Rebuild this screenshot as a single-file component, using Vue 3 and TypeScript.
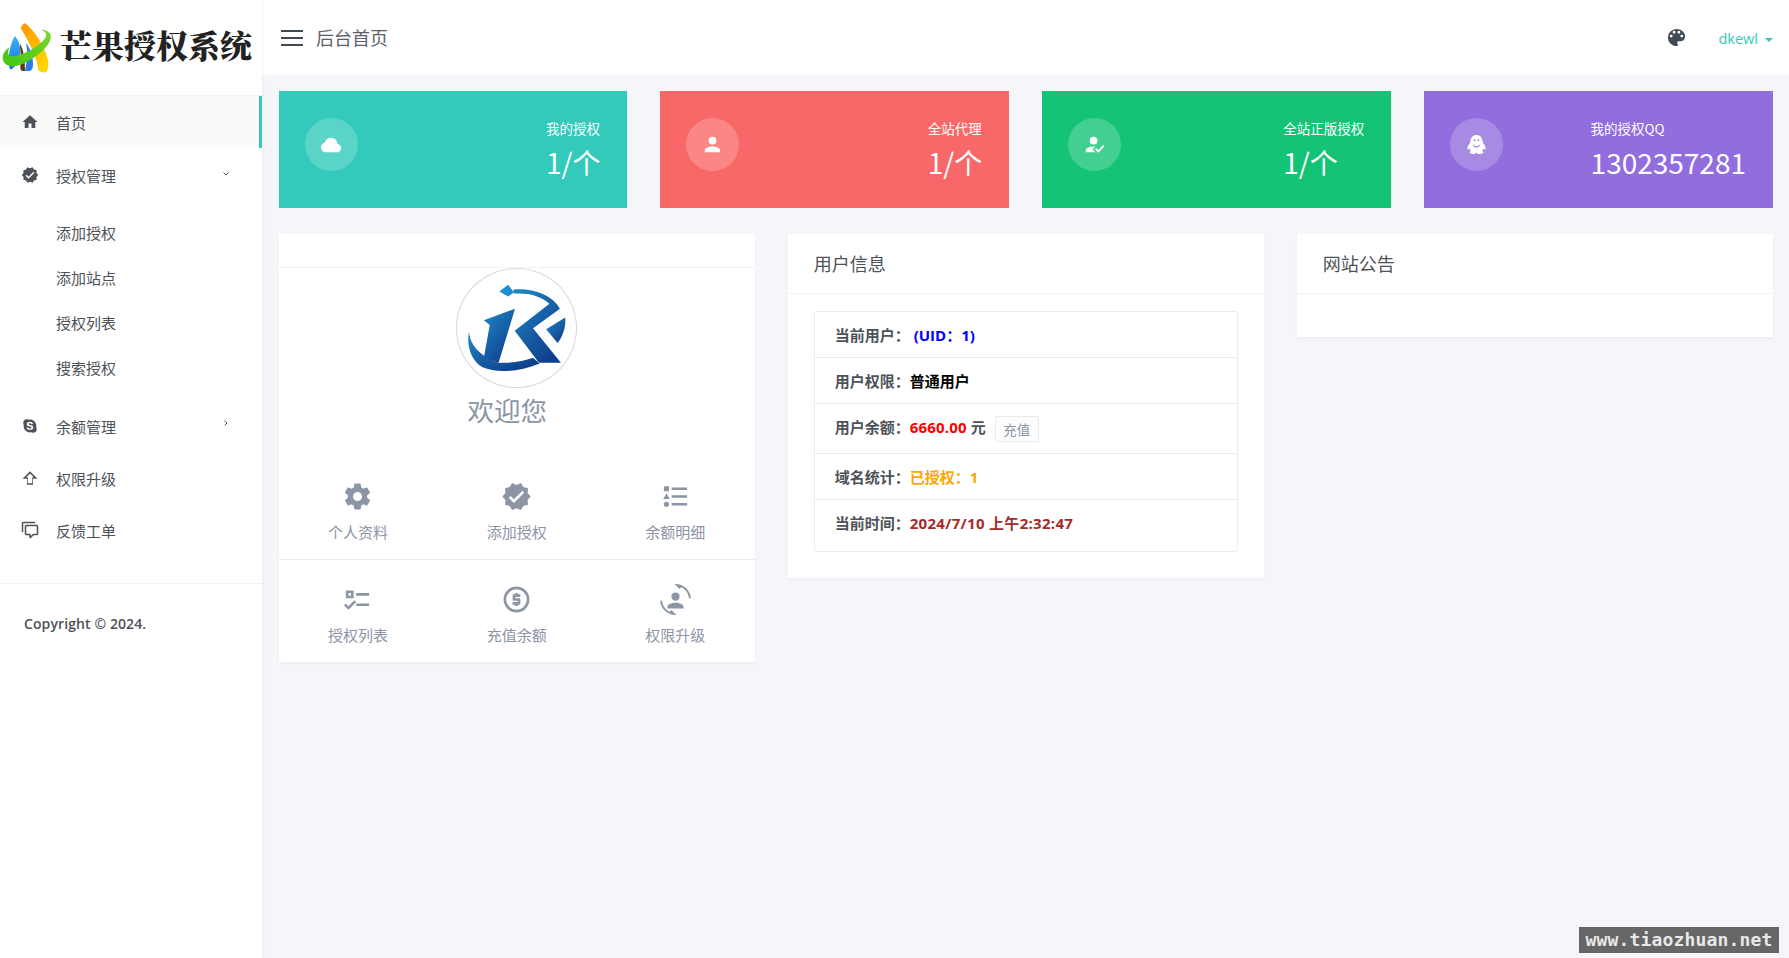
<script setup lang="ts">
const icons: Record<string, string> = {
  home: 'M10 20v-6h4v6h5v-8h3L12 3 2 12h3v8z',
  decagram: 'M23,12L20.56,9.22L20.9,5.54L17.29,4.72L15.4,1.54L12,3L8.6,1.54L6.71,4.72L3.1,5.53L3.44,9.21L1,12L3.44,14.78L3.1,18.47L6.71,19.29L8.6,22.47L12,21L15.4,22.46L17.29,19.28L20.9,18.46L20.56,14.78L23,12M10,17L6,13L7.41,11.59L10,14.17L16.59,7.58L18,9L10,17Z',
  skype: 'M18,6C20.07,8.04 20.85,10.89 20.36,13.55C20.77,14.27 21,15.11 21,16A5,5 0 0,1 16,21C15.11,21 14.27,20.77 13.55,20.36C10.89,20.85 8.04,20.07 6,18C3.93,15.96 3.15,13.11 3.64,10.45C3.23,9.73 3,8.89 3,8A5,5 0 0,1 8,3C8.89,3 9.73,3.23 10.45,3.64C13.11,3.15 15.96,3.93 18,6M12.04,17.16C14.91,17.16 16.34,15.78 16.34,13.92C16.34,12.73 15.78,11.46 13.61,10.97L11.62,10.53C10.86,10.36 10,10.13 10,9.42C10,8.7 10.6,8.2 11.7,8.2C13.93,8.2 13.72,9.73 14.83,9.73C15.41,9.73 15.91,9.39 15.91,8.8C15.91,7.43 13.72,6.4 11.86,6.4C9.85,6.4 7.7,7.26 7.7,9.54C7.7,10.64 8.09,11.81 10.25,12.35L12.94,13.03C13.75,13.23 13.95,13.68 13.95,14.1C13.95,14.78 13.27,15.45 12.04,15.45C9.63,15.45 9.96,13.6 8.67,13.6C8.09,13.6 7.67,14 7.67,14.57C7.67,15.68 9,17.16 12.04,17.16Z',
  upgrade: 'M16,13V21H8V13H2L12,3L22,13H16M7,11H9V19H15V11H17L12,6L7,11Z',
  comments: 'M12,23A1,1 0 0,1 11,22V19H7A2,2 0 0,1 5,17V7A2,2 0 0,1 7,5H21A2,2 0 0,1 23,7V17A2,2 0 0,1 21,19H16.9L13.2,22.71C13,22.89 12.76,23 12.5,23H12M13,17V20.08L16.08,17H21V7H7V17H13M3,15H1V3A2,2 0 0,1 3,1H19V3H3V15Z',
  cog: 'M12,15.5A3.5,3.5 0 0,1 8.5,12A3.5,3.5 0 0,1 12,8.5A3.5,3.5 0 0,1 15.5,12A3.5,3.5 0 0,1 12,15.5M19.43,12.97C19.47,12.65 19.5,12.33 19.5,12C19.5,11.67 19.47,11.34 19.43,11L21.54,9.37C21.73,9.22 21.78,8.95 21.66,8.73L19.66,5.27C19.54,5.05 19.27,4.96 19.05,5.05L16.56,6.05C16.04,5.66 15.5,5.32 14.87,5.07L14.5,2.42C14.46,2.18 14.25,2 14,2H10C9.75,2 9.54,2.18 9.5,2.42L9.13,5.07C8.5,5.32 7.96,5.66 7.44,6.05L4.95,5.05C4.73,4.96 4.46,5.05 4.34,5.27L2.34,8.73C2.21,8.95 2.27,9.22 2.46,9.37L4.57,11C4.53,11.34 4.5,11.67 4.5,12C4.5,12.33 4.53,12.65 4.57,12.97L2.46,14.63C2.27,14.78 2.21,15.05 2.34,15.27L4.34,18.73C4.46,18.95 4.73,19.03 4.95,18.95L7.44,17.94C7.96,18.34 8.5,18.68 9.13,18.93L9.5,21.58C9.54,21.82 9.75,22 10,22H14C14.25,22 14.46,21.82 14.5,21.58L14.87,18.93C15.5,18.67 16.04,18.34 16.56,17.94L19.05,18.95C19.27,19.03 19.54,18.95 19.66,18.73L21.66,15.27C21.78,15.05 21.73,14.78 21.54,14.63L19.43,12.97Z',
  listType: 'M5,9.5L7.5,14H2.5L5,9.5M3,4H7V8H3V4M5,20A2,2 0 0,0 7,18A2,2 0 0,0 5,16A2,2 0 0,0 3,18A2,2 0 0,0 5,20M9,5V7H21V5H9M9,19H21V17H9V19M9,13H21V11H9V13Z',
  listChecks: 'M3,5H9V11H3V5M5,7V9H7V7H5M11,7H21V9H11V7M11,15H21V17H11V15M5,20L1.5,16.5L2.91,15.09L5,17.17L9.59,12.59L11,14L5,20Z',
  usd: 'M11 17V16H9V14H13V13H10A1 1 0 0 1 9 12V9A1 1 0 0 1 10 8H11V7H13V8H15V10H11V11H14A1 1 0 0 1 15 12V15A1 1 0 0 1 14 16H13V17H11M12 2A10 10 0 1 0 22 12A10 10 0 0 0 12 2M12 4A8 8 0 1 1 4 12A8 8 0 0 1 12 4Z',
  convert: 'M7.5 21.5C4.25 19.94 1.91 16.76 1.55 13H.05C.56 19.16 5.71 24 12 24L12.66 23.97L8.85 20.16L7.5 21.5M12 0L11.34 .03L15.15 3.84L16.5 2.5C19.75 4.07 22.09 7.24 22.45 11H23.95C23.44 4.84 18.29 0 12 0M12 6.5A3.2 3.2 0 1 1 12 12.9A3.2 3.2 0 1 1 12 6.5M12 14.5C15 14.5 18.2 15.8 18.2 17.5V19H5.8V17.5C5.8 15.8 9 14.5 12 14.5Z',
  cloud: 'M6.5 20Q4.22 20 2.61 18.43 1 16.85 1 14.58 1 12.63 2.17 11.1 3.35 9.57 5.25 9.15 5.88 6.85 7.75 5.43 9.63 4 12 4 14.93 4 16.96 6.04 19 8.07 19 11 20.73 11.2 21.86 12.5 23 13.78 23 15.5 23 17.38 21.69 18.69 20.38 20 18.5 20Z',
  account: 'M12,4A4,4 0 0,1 16,8A4,4 0 0,1 12,12A4,4 0 0,1 8,8A4,4 0 0,1 12,4M12,14C16.42,14 20,15.79 20,18V20H4V18C4,15.79 7.58,14 12,14Z',
  accountCheck: 'M21.1,12.5L22.5,13.91L15.97,20.5L12.5,17L13.9,15.59L15.97,17.67L21.1,12.5M10,17L13,20H3V18C3,15.79 6.58,14 11,14L12.89,14.11L10,17M11,4A4,4 0 0,1 15,8A4,4 0 0,1 11,12A4,4 0 0,1 7,8A4,4 0 0,1 11,4Z',
  qq: 'M3.18,13.54C3.76,12.16 4.57,11.14 5.17,10.92C5.16,10.12 5.31,9.62 5.56,9.22C5.56,9.19 5.5,8.86 5.72,8.45C5.87,4.85 8.21,2 12,2C15.79,2 18.13,4.85 18.28,8.45C18.5,8.86 18.44,9.19 18.44,9.22C18.69,9.62 18.84,10.12 18.83,10.92C19.43,11.14 20.24,12.16 20.82,13.55C21.57,15.31 21.69,17 21.09,17.3C20.68,17.5 20.03,17 19.42,16.12C19.18,17.1 18.58,18 17.73,18.71C18.63,19.04 19.21,19.58 19.21,20.19C19.21,21.19 17.63,22 15.69,22C13.93,22 12.5,21.34 12.21,20.5H11.79C11.5,21.34 10.07,22 8.31,22C6.37,22 4.79,21.19 4.79,20.19C4.79,19.58 5.37,19.04 6.27,18.71C5.42,18 4.82,17.1 4.58,16.12C3.97,17 3.32,17.5 2.91,17.3C2.31,17 2.43,15.31 3.18,13.54M8.5,11.5L8.5,13C10,16 14,16 15.5,13L15.5,11.5C14,14.5 10,14.5 8.5,11.5ZM10,6.500A1,1.100 0 1,0 10,8.700A1,1.100 0 1,0 10,6.500ZM14,6.500A1,1.100 0 1,0 14,8.700A1,1.100 0 1,0 14,6.500Z',
  palette: 'M17.5,12A1.5,1.5 0 0,1 16,10.5A1.5,1.5 0 0,1 17.5,9A1.5,1.5 0 0,1 19,10.5A1.5,1.5 0 0,1 17.5,12M14.5,8A1.5,1.5 0 0,1 13,6.5A1.5,1.5 0 0,1 14.5,5A1.5,1.5 0 0,1 16,6.5A1.5,1.5 0 0,1 14.5,8M9.5,8A1.5,1.5 0 0,1 8,6.5A1.5,1.5 0 0,1 9.5,5A1.5,1.5 0 0,1 11,6.5A1.5,1.5 0 0,1 9.5,8M6.5,12A1.5,1.5 0 0,1 5,10.5A1.5,1.5 0 0,1 6.5,9A1.5,1.5 0 0,1 8,10.5A1.5,1.5 0 0,1 6.5,12M12,3A9,9 0 0,0 3,12A9,9 0 0,0 12,21A1.5,1.5 0 0,0 13.5,19.5C13.5,19.11 13.35,18.76 13.11,18.5C12.88,18.23 12.73,17.88 12.73,17.5A1.5,1.5 0 0,1 14.23,16H16A5,5 0 0,0 21,11C21,6.58 16.97,3 12,3Z',
}

const subMenu = ['添加授权', '添加站点', '授权列表', '搜索授权']
const lowerMenu = [
  { label: '余额管理', icon: 'skype', arrow: true },
  { label: '权限升级', icon: 'upgrade', arrow: false },
  { label: '反馈工单', icon: 'comments', arrow: false },
]

const stats = [
  { title: '我的授权', value: '1/个', icon: 'cloud', color: '#33cabb', size: 22 },
  { title: '全站代理', value: '1/个', icon: 'account', color: '#f96868', size: 23 },
  { title: '全站正版授权', value: '1/个', icon: 'accountCheck', color: '#15c377', size: 23 },
  { title: '我的授权QQ', value: '1302357281', icon: 'qq', color: '#926dde', size: 23 },
]

const shortcuts = [
  { label: '个人资料', icon: 'cog' },
  { label: '添加授权', icon: 'decagram' },
  { label: '余额明细', icon: 'listType' },
  { label: '授权列表', icon: 'listChecks' },
  { label: '充值余额', icon: 'usd' },
  { label: '权限升级', icon: 'convert' },
]
</script>

<template>
  <div class="page">
    <aside class="sidebar">
      <div class="brand">
        <svg class="brand-mark" viewBox="0 0 56 56" width="56" height="56">
          <defs>
            <linearGradient id="blade" x1="0" y1="0" x2="0.4" y2="1">
              <stop offset="0" stop-color="#ff9500" />
              <stop offset="1" stop-color="#ffd500" />
            </linearGradient>
            <linearGradient id="leftBlue" x1="0" y1="0" x2="0" y2="1">
              <stop offset="0" stop-color="#35b6ee" />
              <stop offset="1" stop-color="#1f6de8" />
            </linearGradient>
            <linearGradient id="ring" x1="0" y1="1" x2="1" y2="0">
              <stop offset="0" stop-color="#3fc714" />
              <stop offset="1" stop-color="#7fd52b" />
            </linearGradient>
          </defs>
          <path d="M15 16C19 21 21 27 20 34C19 41 15 47 12 49C10 50 9 48 9 44C8 34 11 22 15 16Z" fill="url(#leftBlue)" />
          <path d="M20 24C23 28 25 38 25 51H22C20 50 20 46 21 40C21 34 20 29 20 24Z" fill="#5a3a10" />
          <path d="M26 23C30 28 33 36 33 44C33 48 32 50 30 51H25C27 42 28 32 26 23Z" fill="#2c7be5" />
          <path d="M20.700 8C22 5 24 3 25 3.300C33 9 44 24 48 40C49 46 48 50 46 52C43 53 40 52 38.300 50C37 40 33 30 29 23C26 17 23 12 20.700 8Z" fill="url(#blade)" />
          <path d="M41 10C52 10 54 18 46 27C36 38 18 50 7 45C0 41 2 31 10 27C6 33 8 38 16 36C28 33 44 23 46 16C47 13 44 11 41 10Z" fill="url(#ring)" />
        </svg>
        <span class="brand-name">芒果授权系统</span>
      </div>

      <nav class="menu">
        <a class="menu-item active">
          <svg class="menu-icon" viewBox="0 0 24 24"><path :d="icons.home" /></svg>
          <span>首页</span>
        </a>
        <a class="menu-item open">
          <svg class="menu-icon" viewBox="0 0 24 24"><path :d="icons.decagram" /></svg>
          <span>授权管理</span>
          <svg class="chevron" viewBox="0 0 8 8"><path d="M1.5 2.5L4 5L6.500 2.5" /></svg>
        </a>
        <div class="submenu">
          <a v-for="item in subMenu" :key="item" class="submenu-item">{{ item }}</a>
        </div>
        <a v-for="item in lowerMenu" :key="item.label" class="menu-item">
          <svg class="menu-icon" viewBox="0 0 24 24"><path :d="icons[item.icon]" /></svg>
          <span>{{ item.label }}</span>
          <svg v-if="item.arrow" class="chevron" viewBox="0 0 8 8"><path d="M2.500 1.500L5 4L2.500 6.500" /></svg>
        </a>
      </nav>

      <div class="copyright">Copyright © 2024.</div>
    </aside>

    <main class="main">
      <header class="topbar">
        <button class="burger" type="button"><i></i><i></i><i></i></button>
        <span class="page-title">后台首页</span>
        <svg class="palette" viewBox="0 0 24 24"><path :d="icons.palette" /></svg>
        <span class="user">dkewl</span>
        <i class="caret"></i>
      </header>

      <div class="content">
        <section class="stats">
          <div v-for="s in stats" :key="s.title" class="stat" :style="{ background: s.color }">
            <div class="stat-circle">
              <svg viewBox="0 0 24 24" :width="s.size" :height="s.size"><path :d="icons[s.icon]" /></svg>
            </div>
            <div class="stat-text">
              <div class="stat-title">{{ s.title }}</div>
              <div class="stat-value">{{ s.value }}</div>
            </div>
          </div>
        </section>

        <section class="panels">
          <div class="panel">
            <div class="welcome-head"></div>
            <div class="welcome">
              <div class="avatar">
                <svg viewBox="0 0 120 120" width="118" height="118">
                  <defs>
                    <linearGradient id="kk" x1="0" y1="0" x2="0.7" y2="1">
                      <stop offset="0" stop-color="#2088c8" />
                      <stop offset="1" stop-color="#0f3f8c" />
                    </linearGradient>
                  </defs>
                  <path d="M43 23L52 16L58 24L52 28Z" fill="#1d8ed0" />
                  <path d="M57 21C75 19 96 25 104.700 40.300L77.300 60.300L105.700 95.300L83.300 95.300L58.700 62.700L94 35.300C85 27 72 24 58 25Z" fill="url(#kk)" />
                  <path d="M110 49.300L90.700 61.300L102.300 75.300C108 68 111 58 110 49.300Z" fill="url(#kk)" />
                  <path d="M59 40.300L27.300 52L33.300 57L27.300 90.300L42.300 95.300Z" fill="url(#kk)" />
                  <path d="M12.300 63.700C13 76 22 88 42.300 95.300C55 96 68 94 77.300 90.300L84 96C62 105 40 106 26 100C15 94 9 78 12.300 63.700Z" fill="url(#kk)" />
                </svg>
              </div>
              <div class="welcome-text">欢迎您</div>
            </div>
            <div class="shortcuts">
              <a v-for="item in shortcuts" :key="item.label" class="shortcut">
                <svg viewBox="0 0 24 24" width="31" height="31"><path :d="icons[item.icon]" /></svg>
                <span>{{ item.label }}</span>
              </a>
            </div>
          </div>

          <div class="panel">
            <div class="panel-head">用户信息</div>
            <div class="panel-body">
              <ul class="info">
                <li><b>当前用户：</b> <b class="uid">(UID：1)</b></li>
                <li><b>用户权限：</b><b class="role">普通用户</b></li>
                <li class="money">
                  <b>用户余额：</b><b class="balance">6660.00</b><b> 元</b>
                  <button class="recharge" type="button">充值</button>
                </li>
                <li><b>域名统计：</b><b class="count">已授权：1</b></li>
                <li class="last"><b>当前时间：</b><b class="time">2024/7/10 上午2:32:47</b></li>
              </ul>
            </div>
          </div>

          <div class="panel">
            <div class="panel-head">网站公告</div>
            <div class="notice"></div>
          </div>
        </section>
      </div>
    </main>

    <div class="watermark">www.tiaozhuan.net</div>
  </div>
</template>

<style>
html,
body {
  margin: 0;
  background: #f5f6fa;
}
</style>

<style scoped>
.page {
  display: flex;
  height: 958px;
  overflow: hidden;
  background: #f5f6fa;
  color: #4d5259;
  font-family: "Open Sans", "Noto Sans CJK SC", sans-serif;
  font-size: 15px;
}

.sidebar {
  width: 262px;
  flex: none;
  background: #fff;
  box-shadow: 0 0 4px rgba(0, 0, 0, 0.07);
  z-index: 2;
}

.brand {
  display: flex;
  align-items: center;
  height: 96px;
  box-sizing: border-box;
  border-bottom: 1px solid #f1f2f4;
  padding-top: 1px;
  gap: 4px;
}

.brand-mark {
  flex: none;
}

.brand-name {
  font-family: "Noto Serif CJK SC", "Noto Sans CJK SC", sans-serif;
  font-size: 32px;
  font-weight: 900;
  color: #222;
  line-height: 1;
  margin-top: -9px;
  white-space: nowrap;
}

.menu-item {
  position: relative;
  display: flex;
  align-items: center;
  height: 52px;
  padding-left: 21px;
  box-sizing: border-box;
  font-family: "Noto Sans CJK SC", sans-serif;
}

.menu-item.active {
  background: #fafafa;
  box-shadow: inset -3px 0 0 #33cabb;
}

.menu-item.open {
  margin-top: 1px;
}

.menu-icon {
  width: 18px;
  height: 18px;
  margin-right: 17px;
  fill: #4d5259;
  flex: none;
}

.chevron {
  position: absolute;
  left: 222px;
  top: 19px;
  width: 8px;
  height: 8px;
  fill: none;
  stroke: #4d5259;
  stroke-width: 1;
}

.menu-item.open .chevron {
  top: 21px;
}

.submenu {
  padding: 9px 0 10px;
}

.submenu-item {
  display: flex;
  align-items: center;
  height: 45px;
  padding-left: 56px;
  font-family: "Noto Sans CJK SC", sans-serif;
}

.copyright {
  margin-top: 27px;
  border-top: 1px solid #f1f2f4;
  padding: 29px 0 0 24px;
  font-size: 14px;
  font-weight: 600;
  line-height: 21px;
  letter-spacing: 0.1px;
  white-space: nowrap;
}

.main {
  flex: 1;
  min-width: 0;
}

.topbar {
  display: flex;
  align-items: center;
  height: 75px;
  padding: 0 16px 0 19px;
  background: #fff;
  box-sizing: border-box;
}

.burger {
  display: flex;
  flex-direction: column;
  gap: 5px;
  width: 22px;
  padding: 0;
  border: 0;
  background: none;
}

.burger i {
  display: block;
  height: 2px;
  background: #414a54;
}

.page-title {
  margin: -2px 0 0 13px;
  font-family: "Noto Sans CJK SC", sans-serif;
  font-size: 18px;
  color: #5b6168;
}

.palette {
  width: 23px;
  height: 23px;
  margin-left: auto;
  fill: #414a54;
}

.user {
  margin: 2px 0 0 30px;
  font-size: 14.500px;
  color: #33cabb;
}

.caret {
  width: 0;
  height: 0;
  margin: 4px 0 0 7px;
  border-top: 4px solid #33cabb;
  border-left: 4px solid transparent;
  border-right: 4px solid transparent;
}

.content {
  padding: 16px 16px 0 16.6px;
}

.stats {
  display: grid;
  grid-template-columns: repeat(4, 1fr);
  gap: 33px;
}

.stat {
  display: flex;
  justify-content: space-between;
  height: 117px;
  color: #fff;
  padding: 0 27px 0 26px;
  box-sizing: border-box;
}

.stat-circle {
  display: flex;
  align-items: center;
  justify-content: center;
  width: 53px;
  height: 53px;
  margin-top: 27px;
  border-radius: 50%;
  background: rgba(255, 255, 255, 0.2);
}

.stat-circle svg {
  fill: #fff;
}

.stat-text {
  padding-top: 27px;
  font-family: "Noto Sans CJK SC", sans-serif;
}

.stat-title {
  font-size: 13.5px;
  line-height: 20px;
}

.stat-value {
  margin-top: 10px;
  font-size: 28px;
  font-weight: 400;
  line-height: 28px;
}

.panels {
  display: grid;
  grid-template-columns: repeat(3, 1fr);
  gap: 33px;
  align-items: start;
  margin-top: 26px;
}

.panel {
  background: #fff;
  box-shadow: 0 2px 3px rgba(0, 0, 0, 0.035);
}

.welcome-head {
  height: 34px;
  box-sizing: border-box;
  border-bottom: 1px solid #f1f2f4;
}

.welcome {
  display: flex;
  flex-direction: column;
  align-items: center;
  height: 189px;
}

.avatar {
  display: flex;
  align-items: center;
  justify-content: center;
  width: 121px;
  height: 120px;
  margin-right: 1px;
  box-sizing: border-box;
  border: 1px solid #d8d8d8;
  border-radius: 50%;
  overflow: hidden;
}

.welcome-text {
  margin-top: 4px;
  padding-right: 19px;
  font-family: "Noto Sans CJK SC", sans-serif;
  font-size: 26.500px;
  line-height: 36px;
  color: #8b95a5;
}

.shortcuts {
  display: grid;
  grid-template-columns: repeat(3, 1fr);
}

.shortcut {
  display: flex;
  flex-direction: column;
  align-items: center;
  height: 102px;
  padding-top: 24px;
  box-sizing: border-box;
  color: #8b95a5;
  font-family: "Noto Sans CJK SC", sans-serif;
}

.shortcut:nth-child(-n + 3) {
  height: 103px;
  border-bottom: 1px solid #ebebeb;
}

.shortcut svg {
  fill: #8b95a5;
}

.shortcut span {
  margin-top: 9px;
  line-height: 22px;
}

.panel-head {
  height: 60px;
  padding: 0 26px;
  line-height: 58px;
  box-sizing: border-box;
  border-bottom: 1px solid #f1f2f4;
  font-family: "Noto Sans CJK SC", sans-serif;
  font-size: 18px;
}

.panel-body {
  padding: 17px 26px 26px;
}

.notice {
  height: 43px;
}

.info {
  list-style: none;
  margin: 0;
  padding: 0;
  border: 1px solid #ebebeb;
  border-radius: 3px;
}

.info li {
  height: 46px;
  padding: 12px 20px 0;
  box-sizing: border-box;
  border-bottom: 1px solid #ebebeb;
  line-height: 23px;
  white-space: nowrap;
}

.info li.money {
  height: 50px;
}

.info li.last {
  height: 51px;
  border-bottom: 0;
}

.info b {
  font-family: "Open Sans", "Noto Sans CJK SC", sans-serif;
  font-weight: 700;
}

.uid {
  color: #00f;
}

.role {
  color: #000;
}

.balance {
  color: #f00;
  letter-spacing: 0.2px;
}

.count {
  color: #ffa500;
}

.time {
  color: #a52a2a;
  letter-spacing: 0.3px;
}

.recharge {
  height: 26px;
  width: 44px;
  margin-left: 9px;
  padding: 0;
  border: 1px solid #ebebeb;
  border-radius: 2px;
  background: #fcfdfe;
  color: #8b95a5;
  font-family: "Noto Sans CJK SC", sans-serif;
  font-size: 13.5px;
  vertical-align: -2px;
}

.watermark {
  position: fixed;
  right: 10px;
  top: 927px;
  width: 200px;
  height: 26px;
  background: #666;
  color: #e8e8e8;
  font-family: "DejaVu Sans Mono", monospace;
  font-size: 18px;
  font-weight: 700;
  letter-spacing: 0.15px;
  line-height: 26px;
  text-align: center;
}
</style>
